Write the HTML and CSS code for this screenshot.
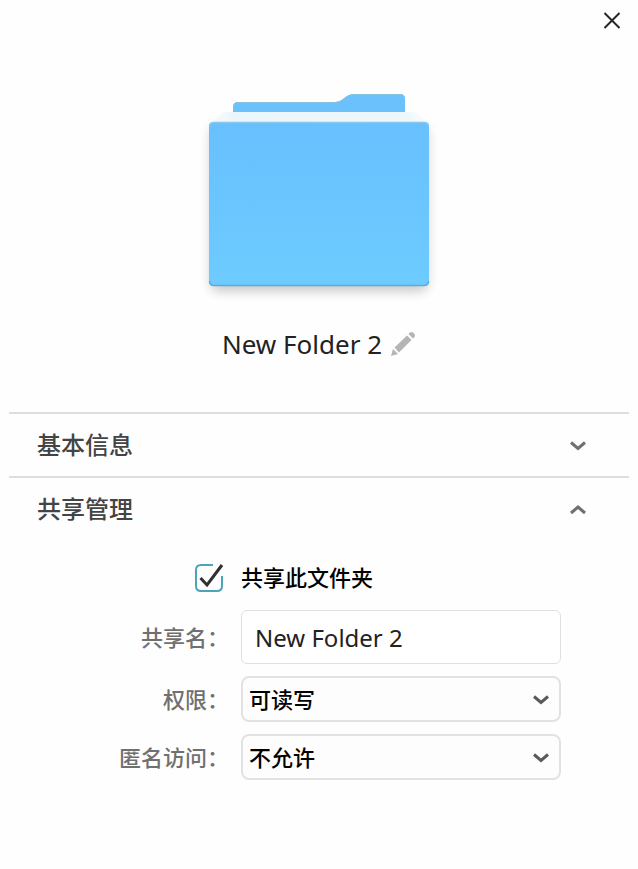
FILE: index.html
```html
<!DOCTYPE html>
<html lang="zh-CN">
<head>
<meta charset="utf-8">
<meta name="viewport" content="width=device-width, initial-scale=1">
<title>New Folder 2</title>
<link rel="stylesheet" href="styles.css">
</head>
<body>
<main class="dialog">
  <header class="titlebar">
    <button class="icon-button" type="button" aria-label="关闭">
      <svg width="18" height="18" viewBox="0 0 18 18"><path d="M1.500 1 16.500 16M16.500 1 1.500 16" fill="none" stroke="#262626" stroke-width="2"/></svg>
    </button>
  </header>

  <section class="summary">
    <svg class="folder" width="260" height="232" viewBox="0 0 260 232" aria-hidden="true">
      <defs>
        <linearGradient id="front" x1="0" y1="0" x2="0" y2="1">
          <stop offset="0" stop-color="#68c0fe"/>
          <stop offset="1" stop-color="#6dcbff"/>
        </linearGradient>
        <linearGradient id="sheet" x1="0" y1="0" x2="1" y2="0">
          <stop offset="0" stop-color="#e9f6fd" stop-opacity="0"/>
          <stop offset=".1" stop-color="#e9f6fd"/>
          <stop offset=".9" stop-color="#edf7fc"/>
          <stop offset="1" stop-color="#edf7fc" stop-opacity="0"/>
        </linearGradient>
        <filter id="blur" filterUnits="userSpaceOnUse" x="0" y="0" width="260" height="232"><feGaussianBlur stdDeviation="6"/></filter>
      </defs>
      <rect x="22" y="46" width="216" height="164" rx="6" fill="#000" opacity=".22" filter="url(#blur)"/>
      <path d="M44 42V26q0-5 5-5h97q5 0 8-3l4-3q3-2 8-2h45q5 0 5 5v24Z" fill="#6bc1fc"/>
      <path d="M45 24q1-2.500 4-2.500h97q5 0 8-3l4-3q3-2 8-2h45q3 0 4.500 2.500" fill="none" stroke="#83c0e2"/>
      <path d="M34 31h192l12 11H22Z" fill="url(#sheet)"/>
      <rect x="20" y="41" width="220" height="164" rx="5" fill="url(#front)"/>
      <path d="M20.500 45q.5-3.500 4.500-3.500h210q4 0 4.500 3.500" fill="none" stroke="#87c7ea" stroke-width="1.500"/>
      <path d="M20.500 200q0 4.500 4.500 4.500h210q4.500 0 4.500-4.500" fill="none" stroke="#62a9d4" stroke-width="1.500"/>
    </svg>
    <div class="name-row">
      <h1 class="name">New Folder 2</h1>
      <button class="icon-button" type="button" aria-label="重命名">
        <svg width="26" height="26" viewBox="0 0 26 26" fill="#b5b5b5"><path d="m1 25 2-7 5 5Z"/><path d="M4.500 16.500 17 4.500l4.500 4.500L9 21.500Z"/><path d="m18.500 3 1.500-1.500q1.500-1.200 3 0l1.500 1.500q1.200 1.500 0 3L23 7.500Z"/></svg>
      </button>
    </div>
  </section>

  <button class="section-header" type="button" aria-expanded="false">
    <span class="section-title">基本信息</span>
    <svg width="18" height="12" viewBox="0 0 18 12"><path d="m2 3.500 7 6 7-6" fill="none" stroke="#707070" stroke-width="3"/></svg>
  </button>
  <button class="section-header" type="button" aria-expanded="true">
    <span class="section-title">共享管理</span>
    <svg width="18" height="12" viewBox="0 0 18 12"><path d="m2 10 7-6 7 6" fill="none" stroke="#707070" stroke-width="3"/></svg>
  </button>

  <form class="share-form">
    <span class="check">
      <input class="check-input" type="checkbox" id="share" checked>
      <svg class="check-mark" width="30" height="30" viewBox="0 0 30 30" aria-hidden="true"><path d="M19 2H7Q2 2 2 7v16q0 5 5 5h16q5 0 5-5V13" fill="none" stroke="#4ba4b9" stroke-width="2"/><path d="m6.500 15 6.500 7L28 2" fill="none" stroke="#303030" stroke-width="3"/></svg>
    </span>
    <label class="check-label" for="share">共享此文件夹</label>

    <label class="label" for="share-name">共享名：</label>
    <input class="text-input" type="text" id="share-name" value="New Folder 2">

    <label class="label" for="access">权限：</label>
    <span class="select-wrap">
      <select class="select" id="access"><option>可读写</option></select>
      <svg class="select-arrow" width="18" height="12" viewBox="0 0 18 12" aria-hidden="true"><path d="m2 3.500 7 6 7-6" fill="none" stroke="#5a5a5a" stroke-width="3"/></svg>
    </span>

    <label class="label" for="guest">匿名访问：</label>
    <span class="select-wrap">
      <select class="select" id="guest"><option>不允许</option></select>
      <svg class="select-arrow" width="18" height="12" viewBox="0 0 18 12" aria-hidden="true"><path d="m2 3.500 7 6 7-6" fill="none" stroke="#5a5a5a" stroke-width="3"/></svg>
    </span>
  </form>
</main>
</body>
</html>
```
FILE: styles.css
```css
* {
  box-sizing: border-box;
}

body {
  margin: 0;
  background: #fefefe;
  color: #222;
  font-family: "Noto Sans", "Noto Sans CJK SC", sans-serif;
}

button,
input,
select {
  font: inherit;
  color: inherit;
}

svg {
  display: block;
}

.dialog {
  padding: 0 9px;
}

.titlebar {
  display: flex;
  justify-content: flex-end;
  height: 40px;
  padding: 12px 8px 0 0;
}

.icon-button {
  display: block;
  height: max-content;
  padding: 0;
  border: 0;
  background: none;
}

.summary {
  display: flex;
  flex-direction: column;
  align-items: center;
  padding: 41px 0 50px;
}

.name-row {
  display: flex;
  align-items: center;
  gap: 8px;
  margin-top: 13px;
}

.name {
  margin: 0;
  font-size: 26px;
  font-weight: 400;
  line-height: 36px;
}

.section-header {
  display: flex;
  align-items: center;
  justify-content: space-between;
  width: 100%;
  height: 64px;
  padding: 0 42px 0 28px;
  border: 0;
  border-top: 2px solid #dedede;
  background: none;
  color: #444;
  font-family: "Noto Sans CJK SC", sans-serif;
  font-size: 24px;
  font-weight: 500;
}

.section-title {
  padding-bottom: 4px;
}

.share-form {
  display: grid;
  grid-template-columns: 220px 1fr;
  gap: 12px;
  align-items: center;
  padding: 18px 68px 40px 0;
  font-family: "Noto Sans CJK SC", sans-serif;
  font-size: 22px;
}

.label {
  padding-bottom: 3px;
  color: #707070;
  font-weight: 500;
  text-align: right;
}

.check {
  position: relative;
  justify-self: end;
  width: 30px;
  height: 30px;
  margin-right: 5px;
}

.check-input {
  appearance: none;
  width: 100%;
  height: 100%;
  margin: 0;
}

.check-mark {
  position: absolute;
  inset: 0;
  pointer-events: none;
}

.check-label {
  padding-bottom: 3px;
  color: #000;
  font-weight: 500;
  line-height: 37px;
}

.text-input {
  width: 100%;
  min-width: 0;
  height: 54px;
  padding: 0 13px;
  border: 1px solid #e0e0e0;
  border-radius: 6px;
  background: #fff;
  font-family: "Noto Sans", "Noto Sans CJK SC", sans-serif;
  font-size: 24px;
}

.select-wrap {
  position: relative;
}

.select {
  display: block;
  appearance: none;
  width: 100%;
  height: 46px;
  padding: 0 40px 3px 6px;
  border: 2px solid #e2e2e2;
  border-radius: 8px;
  background: #fdfdfd;
  color: #000;
  font-weight: 500;
}

.select-arrow {
  position: absolute;
  top: 17px;
  right: 11px;
  pointer-events: none;
}
```
